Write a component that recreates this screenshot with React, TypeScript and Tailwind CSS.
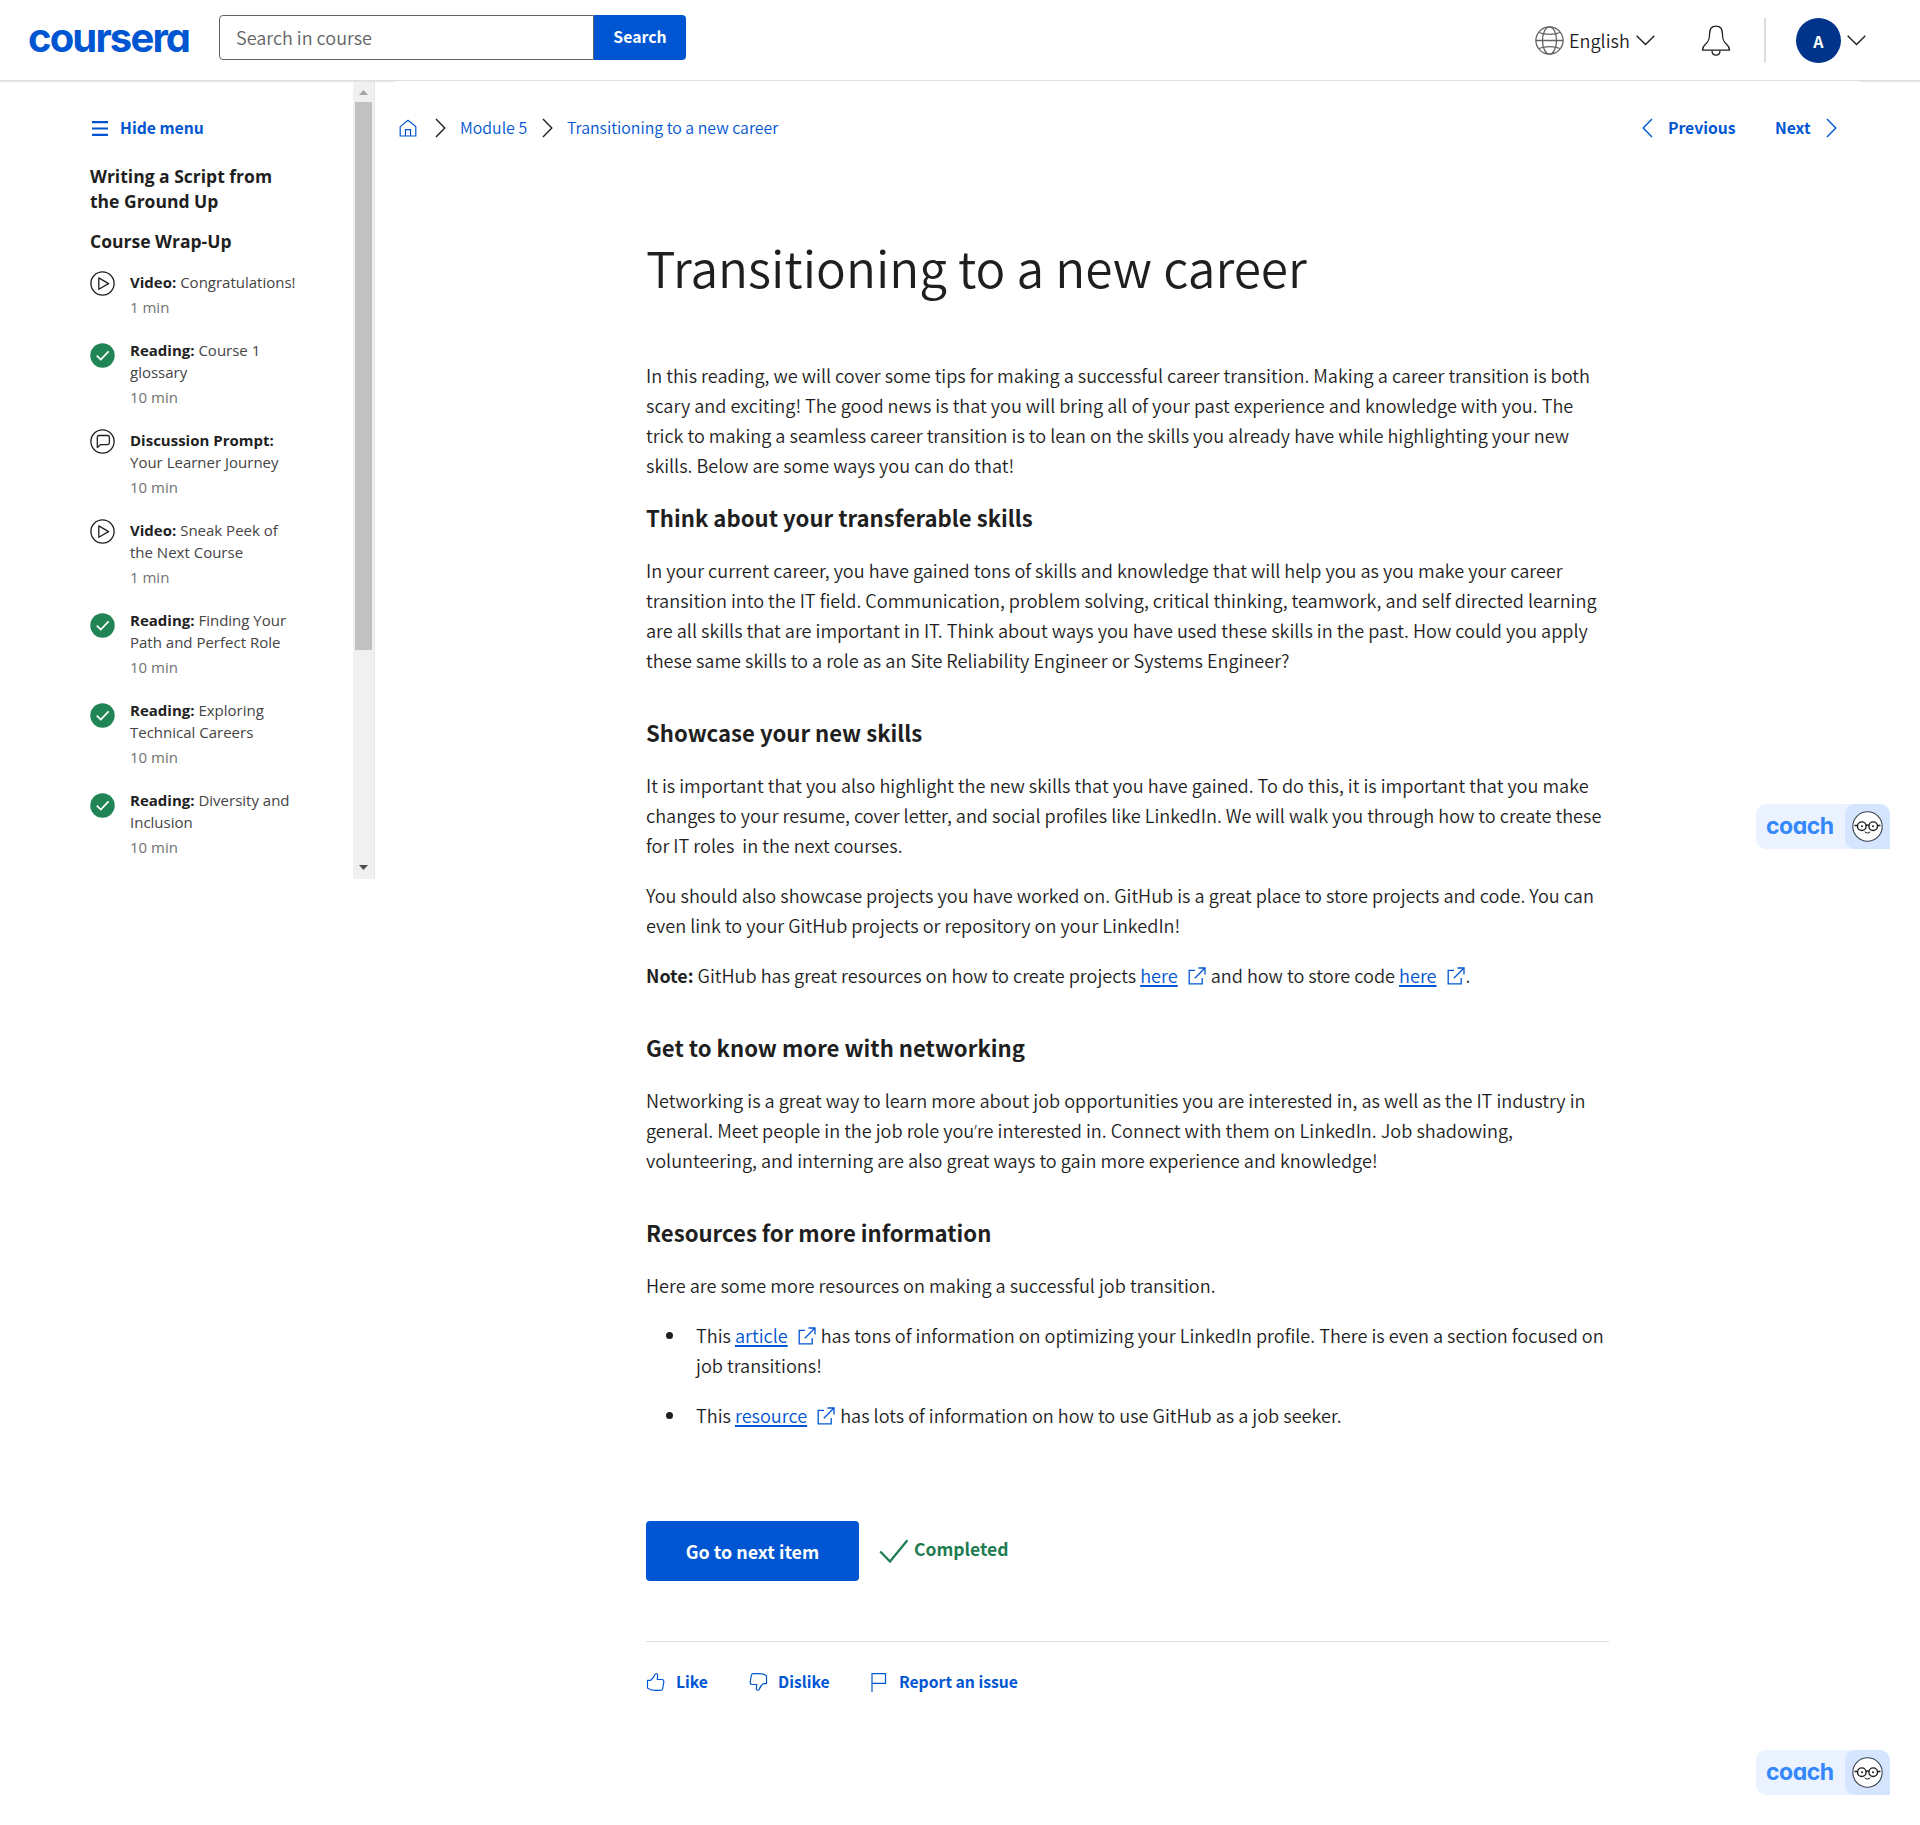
import type { ReactNode } from "react";

const SANS = "font-['Noto_Sans_CJK_SC','Noto_Sans',sans-serif]";

function Chevron({ dir, className = "" }: { dir: "left" | "right" | "down"; className?: string }) {
  if (dir === "down")
    return (
      <svg width="19" height="11" viewBox="0 0 19 11" className={"shrink-0 " + className} fill="none" stroke="currentColor" strokeWidth="1.4">
        <path d="M.7 .8 9.5 9.4 18.3.8" />
      </svg>
    );
  return (
    <svg width="11" height="20" viewBox="0 0 11 20" className={"shrink-0 " + className} fill="none" stroke="currentColor" strokeWidth="1.4">
      <path d={dir === "right" ? "M1 1 9.8 10 1 19" : "M10 1 1.2 10 10 19"} />
    </svg>
  );
}

function Globe() {
  return (
    <svg width="29" height="29" viewBox="0 0 29 29" fill="none" stroke="#636363" strokeWidth="1.3" className="shrink-0">
      <circle cx="14.5" cy="14.5" r="13.6" />
      <ellipse cx="14.5" cy="14.5" rx="7" ry="13.6" />
      <path d="M1 14.5h27M4 6.5c5.5 2.4 15.500 2.400 21 0M4 22.500c5.500-2.400 15.500-2.400 21 0" />
    </svg>
  );
}

function Bell() {
  return (
    <svg width="30" height="32" viewBox="0 0 30 32" fill="none" stroke="#1f1f1f" strokeWidth="1.3" className="shrink-0">
      <path d="M8.600 8.500C8.600 4 11 1.200 15 1.200s6.400 2.800 6.400 7.300c0 6 1 8.500 4.600 11.200 1.500 1.200 2.300 2.800 2.500 5.500H1.500c.2-2.700 1-4.300 2.500-5.500 3.600-2.700 4.600-5.200 4.600-11.200Z" />
      <path d="M11 25.500c0 3 1.700 4.700 4 4.700s4-1.700 4-4.700" />
    </svg>
  );
}

function Header() {
  return (
    <header className="relative flex h-[81px] items-start border-b border-[#dedede] bg-white">
      <div className="absolute left-0 top-[81px] h-px w-[395px] bg-[#e5e5e5]" />
      <div className="absolute right-0 top-[81px] h-px w-[60px] bg-[#e5e5e5]" />
      <div className="ml-[28px] mt-[15px] h-[46px] w-[191px] font-['Inter',sans-serif] text-[40px] font-bold leading-[46px] tracking-[-1.850px] text-[#0056d2] [font-feature-settings:'cv11']">
        coursera
      </div>
      <div className={"mt-[15px] flex h-[45px] w-[467px] " + SANS}>
        <div className="flex w-[375px] items-center rounded-l-[4px] border border-[#636363] pb-px pl-[16px] text-[18px] font-[350] leading-[24px] text-[#636363]">
          Search in course
        </div>
        <div className="flex w-[92px] items-center justify-center rounded-r-[4px] bg-[#0056d2] pb-px text-[15.8px] font-bold text-white">
          Search
        </div>
      </div>
      <div className={"ml-auto mt-[18px] flex h-[45px] items-center pr-[54px] text-[#1f1f1f] " + SANS}>
        <Globe />
        <span className="ml-[5px] w-[61px] pb-px text-[18.100px] font-[350] leading-[24px]">English</span>
        <Chevron dir="down" className="ml-[6px]" />
        <span className="ml-[46px]">
          <Bell />
        </span>
        <div className="ml-[33px] h-[45px] w-[2px] bg-[#dedede]" />
        <div className="ml-[30px] flex h-[45px] w-[45px] items-center justify-center rounded-full bg-[#00348a] text-[16px] font-bold text-white">
          A
        </div>
        <Chevron dir="down" className="ml-[6px]" />
      </div>
    </header>
  );
}

type Kind = "video" | "done" | "discussion";

const items: { kind: Kind; type: string; first: string; second?: string; time: string }[] = [
  { kind: "video", type: "Video:", first: "Congratulations!", time: "1 min" },
  { kind: "done", type: "Reading:", first: "Course 1", second: "glossary", time: "10 min" },
  { kind: "discussion", type: "Discussion Prompt:", first: "", second: "Your Learner Journey", time: "10 min" },
  { kind: "video", type: "Video:", first: "Sneak Peek of", second: "the Next Course", time: "1 min" },
  { kind: "done", type: "Reading:", first: "Finding Your", second: "Path and Perfect Role", time: "10 min" },
  { kind: "done", type: "Reading:", first: "Exploring", second: "Technical Careers", time: "10 min" },
  { kind: "done", type: "Reading:", first: "Diversity and", second: "Inclusion", time: "10 min" },
];

function ItemIcon({ kind }: { kind: Kind }) {
  if (kind === "done")
    return (
      <svg width="25" height="25" viewBox="0 0 25 25" fill="none" className="mt-[4px] shrink-0">
        <circle cx="12.500" cy="12.500" r="12.200" fill="#208455" />
        <path d="m6.800 12.600 4 4 7.800-8.200" stroke="#fff" strokeWidth="1.700" />
      </svg>
    );
  return (
    <svg width="25" height="25" viewBox="0 0 25 25" fill="none" stroke="#1f1f1f" strokeWidth="1.300" className="shrink-0">
      <circle cx="12.500" cy="12.500" r="11.600" />
      {kind === "video" ? (
        <path d="M8.800 6.900v11.400l9.800-5.700Z" strokeLinejoin="round" />
      ) : (
        <path d="M7.300 18.500V8.300c0-1.200.6-1.800 1.800-1.800h8.500c1.200 0 1.800.6 1.800 1.800v5.500c0 1.200-.6 1.800-1.800 1.800h-6.900Z" strokeLinejoin="round" />
      )}
    </svg>
  );
}

function Sidebar() {
  return (
    <aside className="flex h-[798px] w-[376px] shrink-0">
      <div className="w-[353px] pl-[90px] font-['Open_Sans',sans-serif] text-[#1f1f1f]">
        <div className={"mt-[35px] flex h-[24px] items-center pl-[2px] text-[#0056d2] " + SANS}>
          <svg width="16" height="17" viewBox="0 0 16 17" fill="currentColor">
            <path d="M0 1h16v2.200H0zM0 7.400h16v2.200H0zM0 13.800h16V16H0z" />
          </svg>
          <span className="ml-[12px] text-[15.700px] font-bold">Hide menu</span>
        </div>
        <h2 className="mt-[24px] whitespace-nowrap text-[17.500px] font-bold leading-[25px]">
          Writing a Script from
          <br />
          the Ground Up
        </h2>
        <h2 className="mt-[15px] text-[17.500px] font-bold leading-[25px]">Course Wrap-Up</h2>
        <ul className="mt-[17px] flex flex-col gap-[21px]">
          {items.map((it, i) => (
            <li key={i} className="flex gap-[15px]">
              <ItemIcon kind={it.kind} />
              <div className="whitespace-nowrap text-[15px] leading-[22px] text-[#444]">
                <div>
                  <span className="font-bold text-[#1f1f1f]">{it.type}</span> {it.first}
                </div>
                {it.second && <div>{it.second}</div>}
                <div className="mt-[3px] text-[#737373]">{it.time}</div>
              </div>
            </li>
          ))}
        </ul>
      </div>
      <div className="flex w-[22px] flex-col items-center border-r border-[#e5e5e5] bg-[#f0f0f0]">
        <svg width="9" height="5" viewBox="0 0 9 5" className="mt-[9px]" fill="#a3a3a3">
          <path d="M4.500 0 9 5H0z" />
        </svg>
        <div className="mt-[7px] h-[548px] w-[17px] bg-[#c1c1c1]" />
        <svg width="9" height="5" viewBox="0 0 9 5" className="mb-[9px] mt-auto" fill="#505050">
          <path d="M4.500 5 9 0H0z" />
        </svg>
      </div>
    </aside>
  );
}

function Breadcrumbs() {
  return (
    <nav className={"flex h-[24px] items-center whitespace-nowrap text-[15.700px] leading-[24px] text-[#0056d2] " + SANS}>
      <svg width="18" height="18" viewBox="0 0 18 18" fill="none" stroke="currentColor" strokeWidth="1.200">
        <path d="M1.200 7.600 9 1.200l7.800 6.400v9.400H1.200ZM6.500 17v-6.300h5V17" />
      </svg>
      <Chevron dir="right" className="ml-[18px] text-[#1f1f1f]" />
      <span className="ml-[14px] w-[68px] pb-px text-[15.900px] font-[350]">Module 5</span>
      <Chevron dir="right" className="ml-[14px] text-[#1f1f1f]" />
      <span className="ml-[14px] pb-px text-[15.850px] font-[350]">Transitioning to a new career</span>
      <div className="ml-auto flex items-center font-bold">
        <Chevron dir="left" />
        <span className="ml-[15px] w-[67px] pb-px">Previous</span>
        <span className="ml-[40px] w-[36px] pb-px">Next</span>
        <Chevron dir="right" className="ml-[15px]" />
      </div>
    </nav>
  );
}

function ExtLink({ children }: { children: ReactNode }) {
  return (
    <a className="text-[#0056d2]">
      <span className="underline decoration-2 underline-offset-[2px]">{children}</span>
      <svg width="18" height="18" viewBox="0 0 18 18" fill="none" stroke="currentColor" strokeWidth="1.300" className="ml-[10px] mr-px inline-block align-[-2px]">
        <path d="M7 3.300H1.200v13.500h13V11M10.500 1h6.500v6.500M17 1 6.800 11.200" />
      </svg>
    </a>
  );
}

function Lines({ lines }: { lines: ReactNode[] }) {
  return (
    <p className="mb-[20px]">
      {lines.map((l, i) => (
        <span key={i} className="block h-[30px]">
          {l}
        </span>
      ))}
    </p>
  );
}

function Heading({ children, first = false }: { children: ReactNode; first?: boolean }) {
  return (
    <h3 className={"mb-[23px] text-[22.150px] font-bold leading-[30px] text-[#1f1f1f] " + (first ? "mt-[22px]" : "mt-[42px]")}>{children}</h3>
  );
}

function Article() {
  return (
    <article className={"w-[963px] whitespace-nowrap text-[18.130px] leading-[30px] text-[#1f1f1f] " + SANS}>
      <h1 className="text-[49.600px] font-[350] leading-[73px]">Transitioning to a new career</h1>
      <div className="pt-[57px] font-[350] text-[#1f1f1f]">
        <Lines
          lines={[
            "In this reading, we will cover some tips for making a successful career transition. Making a career transition is both",
            "scary and exciting! The good news is that you will bring all of your past experience and knowledge with you. The",
            "trick to making a seamless career transition is to lean on the skills you already have while highlighting your new",
            "skills. Below are some ways you can do that!",
          ]}
        />
        <Heading first>Think about your transferable skills</Heading>
        <Lines
          lines={[
            "In your current career, you have gained tons of skills and knowledge that will help you as you make your career",
            "transition into the IT field. Communication, problem solving, critical thinking, teamwork, and self directed learning",
            "are all skills that are important in IT. Think about ways you have used these skills in the past. How could you apply",
            "these same skills to a role as an Site Reliability Engineer or Systems Engineer?",
          ]}
        />
        <Heading>Showcase your new skills</Heading>
        <Lines
          lines={[
            "It is important that you also highlight the new skills that you have gained. To do this, it is important that you make",
            "changes to your resume, cover letter, and social profiles like LinkedIn. We will walk you through how to create these",
            "for IT roles \u00a0in the next courses.",
          ]}
        />
        <Lines
          lines={[
            "You should also showcase projects you have worked on. GitHub is a great place to store projects and code. You can",
            "even link to your GitHub projects or repository on your LinkedIn!",
          ]}
        />
        <p className="h-[30px]">
          <b className="text-[17.900px] font-bold">Note:</b> GitHub has great resources on how to create projects <ExtLink>here</ExtLink> and how to store code{" "}
          <ExtLink>here</ExtLink>.
        </p>
        <Heading>Get to know more with networking</Heading>
        <Lines
          lines={[
            "Networking is a great way to learn more about job opportunities you are interested in, as well as the IT industry in",
            <>
              general. Meet people in the job role you<span className="font-['Open_Sans',sans-serif] leading-[0]">’</span>re interested in. Connect with them on
              LinkedIn. Job shadowing,
            </>,
            "volunteering, and interning are also great ways to gain more experience and knowledge!",
          ]}
        />
        <Heading>Resources for more information</Heading>
        <Lines lines={["Here are some more resources on making a successful job transition."]} />
        <ul className="flex flex-col gap-[20px]">
          <li className="flex h-[60px]">
            <span className="ml-[20px] mt-[12px] h-[7px] w-[7px] rounded-full bg-[#1f1f1f]" />
            <span className="ml-[23px]">
              This <ExtLink>article</ExtLink> has tons of information on optimizing your LinkedIn profile. There is even a section focused on
              <br />
              job transitions!
            </span>
          </li>
          <li className="flex h-[30px]">
            <span className="ml-[20px] mt-[12px] h-[7px] w-[7px] rounded-full bg-[#1f1f1f]" />
            <span className="ml-[23px]">
              This <ExtLink>resource</ExtLink> has lots of information on how to use GitHub as a job seeker.
            </span>
          </li>
        </ul>
      </div>
      <div className="mt-[91px] flex h-[60px] items-center">
        <button className="h-[60px] w-[213px] rounded-[4px] bg-[#0056d2] text-[17.900px] font-bold text-white">Go to next item</button>
        <svg width="30" height="25" viewBox="0 0 30 25" fill="none" stroke="#1d7c50" strokeWidth="2.200" className="ml-[20px]">
          <path d="m1.200 12.500 9.800 10L28.400 1.200" />
        </svg>
        <span className="ml-[5px] pb-[4px] text-[17.500px] font-bold text-[#1d7c50]">Completed</span>
      </div>
      <div className="mt-[60px] h-px bg-[#dedede]" />
      <div className="mt-[28px] flex h-[24px] items-center text-[15.700px] font-bold text-[#0056d2]">
        <svg width="19" height="20" viewBox="0 0 19 20" fill="none" stroke="currentColor" strokeWidth="1.200" strokeLinejoin="round">
          <path d="M1.500 8.400v7.700c2 1.700 4.500 2.300 7.500 2.300h5.500c1.400 0 2-.7 2.200-1.900l1.100-6.500c.2-1.600-.6-2.500-2-2.500h-4.500l.4-4.600c0-1.300-2.300-1.600-2.800-.4C7.800 5.700 6.500 7 4.500 8.400Z" />
        </svg>
        <span className="ml-[11px] w-[33px]">Like</span>
        <svg width="19" height="20" viewBox="0 0 19 20" fill="none" stroke="currentColor" strokeWidth="1.200" strokeLinejoin="round" className="ml-[40px]">
          <path d="M17.500 11.600V3.900C15.500 2.200 13 1.600 10 1.600H4.500c-1.400 0-2 .7-2.200 1.900L1.200 10c-.2 1.600.6 2.500 2 2.500h4.500l-.4 4.600c0 1.300 2.300 1.600 2.800.4 1.100-3.200 2.400-4.500 4.400-5.900Z" />
        </svg>
        <span className="ml-[10px] w-[51px]">Dislike</span>
        <svg width="16" height="20" viewBox="0 0 16 20" fill="none" stroke="currentColor" strokeWidth="1.200" className="ml-[42px]">
          <path d="M1 20V1.600h13.500v9.800H1" />
        </svg>
        <span className="ml-[12px]">Report an issue</span>
      </div>
    </article>
  );
}

function Coach() {
  return (
    <div className="flex h-[45px] w-[134px] overflow-hidden rounded-l-[10px] rounded-tr-[10px] bg-[#eaf3ff]">
      <span className="w-[89px] pl-[10px] font-['Inter',sans-serif] text-[23px] font-bold leading-[45px] tracking-[-0.5px] text-[#3587fc] [font-feature-settings:'cv11']">
        coach
      </span>
      <div className="flex w-[45px] items-center justify-center rounded-l-[10px] bg-[#d5e5ff]">
        <svg width="31" height="31" viewBox="0 0 31 31" fill="none" stroke="#1f1f1f">
          <circle cx="15.500" cy="15.500" r="14.700" fill="#fff" stroke="#3a4250" strokeWidth="1.100" />
          <circle cx="9.800" cy="15.200" r="4.300" strokeWidth="1.400" />
          <circle cx="21.200" cy="15.200" r="4.300" strokeWidth="1.400" />
          <path d="M14 14.600c.8-.8 2.200-.8 3 0M2.500 14.500h3M25.500 14.500h3" strokeWidth="1.300" />
          <circle cx="10" cy="15.200" r="1" fill="#1f1f1f" stroke="none" />
          <circle cx="21" cy="15.200" r="1" fill="#1f1f1f" stroke="none" />
          <path d="M12.700 20.800c1.600 1.600 4 1.600 5.600 0" strokeWidth="1" />
        </svg>
      </div>
    </div>
  );
}

export default function App() {
  return (
    <div className="relative h-[1825px] w-[1920px] overflow-hidden bg-white">
      <Header />
      <div className="flex">
        <Sidebar />
        <main className="flex-1 pl-[23px] pr-[83px] pt-[35px]">
          <Breadcrumbs />
          <div className="pl-[247px] pt-[90px]">
            <Article />
          </div>
        </main>
      </div>
      <div className="absolute right-[30px] top-[804px]">
        <Coach />
      </div>
      <div className="absolute right-[30px] top-[1750px]">
        <Coach />
      </div>
    </div>
  );
}
